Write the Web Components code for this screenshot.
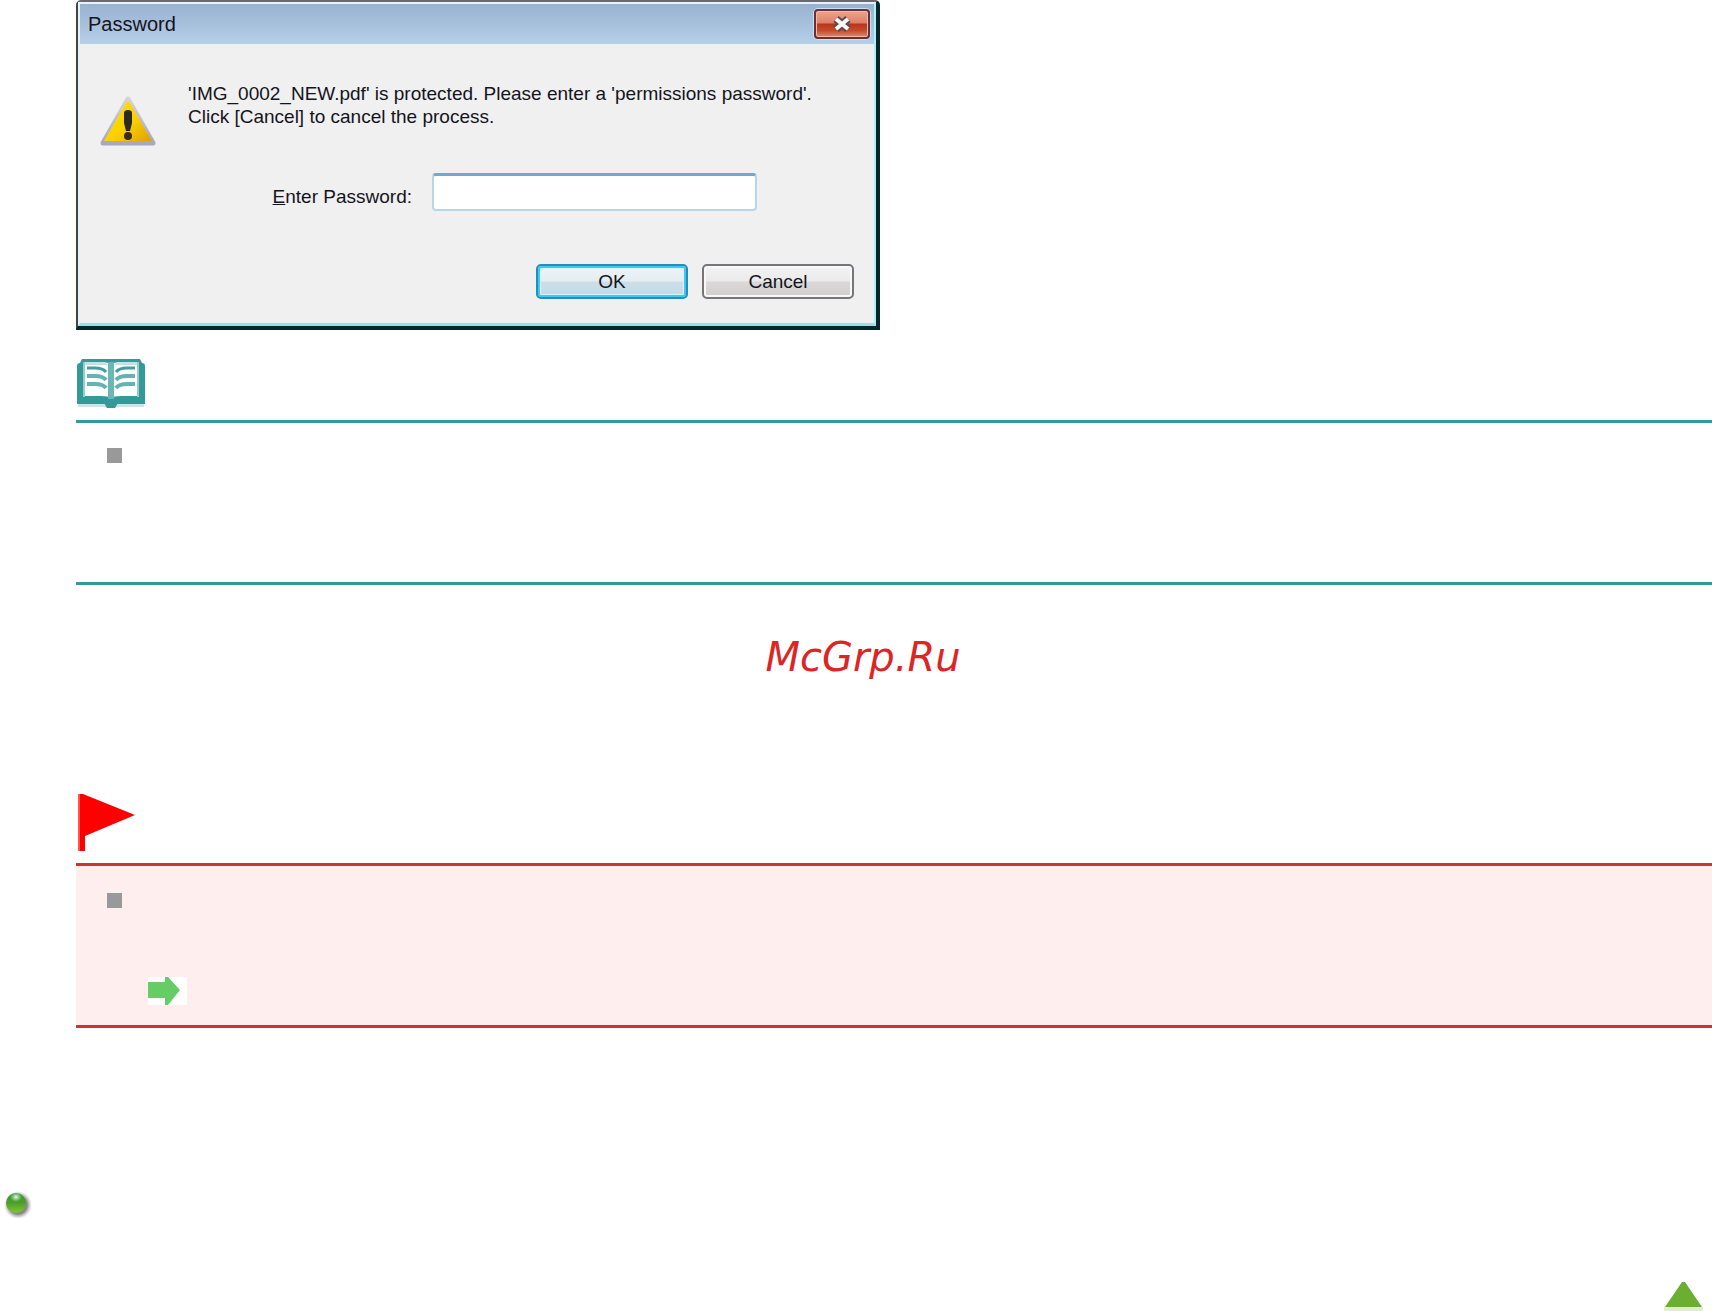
<!DOCTYPE html>
<html lang="en">

<head>
    <meta charset="UTF-8">
    <meta name="viewport" content="width=device-width, initial-scale=1.0">
    <title>Password</title>
    <style>
        body {
            margin: 0;
            background: #fff;
            color: #14141c;
            font-family: "Liberation Sans", Arial, sans-serif;
        }
    </style>
</head>

<body>
    <manual-page></manual-page>

    <script>
        // Attach an open shadow root filled from a template
        function render(host, html) {
            const template = document.createElement('template');
            template.innerHTML = html;
            host.attachShadow({ mode: 'open' }).appendChild(template.content.cloneNode(true));
        }

        class DialogButton extends HTMLElement {
            constructor() {
                super();
                render(this, `
                    <style>
                        :host { display: block; }
                        button {
                            box-sizing: border-box;
                            display: block;
                            width: 152px;
                            height: 35px;
                            padding: 0;
                            border: 2px solid #77757a;
                            border-radius: 5px;
                            background: linear-gradient(#f2f2f2, #ebebeb 48%, #dad8d8 52%, #d0cdcd);
                            box-shadow: inset 0 0 0 2px #f8f8f8;
                            color: inherit;
                            font: inherit;
                        }
                        :host([primary]) button {
                            border-color: #218fbd;
                            background: linear-gradient(#eef3f5, #e4eef2 48%, #ccdfe9 52%, #c6d7e3);
                            box-shadow: inset 0 0 0 2px #42c8ee, inset 0 0 0 3px #d2f4fc;
                        }
                    </style>
                    <button type="button"><slot></slot></button>
                `);
            }
        }

        class PasswordDialog extends HTMLElement {
            constructor() {
                super();
                render(this, `
                    <style>
                        :host {
                            box-sizing: border-box;
                            display: block;
                            width: 804px;
                            max-width: 100%;
                            border: solid #06262c;
                            border-width: 2px 4px 4px 2px;
                            border-top-color: #6c6a70;
                            border-left-color: #47413f;
                            border-radius: 5px 5px 0 0;
                            background: #f0f0f0;
                            font-size: 19px;
                            line-height: 23px;
                        }
                        .frame {
                            border: solid #e4f4fa;
                            border-width: 2px 2px 3px 2px;
                            border-bottom-color: #8fe4e8;
                            border-right-color: #a9f2f5;
                        }
                        header {
                            display: flex;
                            align-items: center;
                            justify-content: space-between;
                            height: 40px;
                            padding: 0 4px 0 8px;
                            background: linear-gradient(#98b2d0, #a7c0dc 50%, #b5d0ea);
                        }
                        h1 {
                            margin: 0;
                            font-size: 20px;
                            font-weight: normal;
                        }
                        .close {
                            display: flex;
                            align-items: center;
                            justify-content: center;
                            width: 56px;
                            height: 30px;
                            padding: 0;
                            border: 2px solid #64303a;
                            border-radius: 4px;
                            background: linear-gradient(#eba48f, #de8068 46%, #b8351a 50%, #c54b2c 75%, #e28a69);
                            box-shadow: inset 0 0 0 1px #f3b9a5, 0 0 0 1px #cddff2;
                        }
                        .message {
                            display: flex;
                            gap: 32px;
                            padding: 38px 20px 0 20px;
                        }
                        .message svg { flex: none; margin-top: 14px; }
                        p { margin: 0; }
                        .field {
                            display: flex;
                            align-items: center;
                            justify-content: flex-end;
                            gap: 20px;
                            padding: 25px 117px 0 0;
                        }
                        label { padding-top: 8px; }
                        input {
                            box-sizing: border-box;
                            width: 325px;
                            height: 38px;
                            padding: 0 8px;
                            border: 2px solid #b5d7ec;
                            border-top: 3px solid #79a6c5;
                            border-radius: 4px;
                            background: #fff;
                            font: inherit;
                        }
                        .actions {
                            display: flex;
                            justify-content: flex-end;
                            gap: 14px;
                            padding: 53px 20px 24px;
                        }
                    </style>
                    <div class="frame">
                        <header>
                            <h1>Password</h1>
                            <button class="close" type="button" aria-label="Close">
                                <svg width="22" height="18" viewBox="0 0 22 18">
                                    <path d="M5 4l12 10M17 4L5 14" stroke="#5f4650" stroke-width="8"/>
                                    <path d="M5 4l12 10M17 4L5 14" stroke="#f8f6f6" stroke-width="4"/>
                                </svg>
                            </button>
                        </header>
                        <div class="message">
                            <svg width="56" height="52" viewBox="0 0 56 52" aria-hidden="true">
                                <defs>
                                    <linearGradient id="rim" x2="0" y2="1">
                                        <stop stop-color="#d5d3dc"/>
                                        <stop offset="1" stop-color="#a7a7bd"/>
                                    </linearGradient>
                                    <linearGradient id="fill" x2="1" y2="1">
                                        <stop stop-color="#ffe600"/>
                                        <stop offset=".55" stop-color="#fbd000"/>
                                        <stop offset="1" stop-color="#dfa000"/>
                                    </linearGradient>
                                </defs>
                                <path d="M28 3L53 47H3z" fill="url(#rim)" stroke="url(#rim)" stroke-width="5" stroke-linejoin="round"/>
                                <path d="M28 4L52 45H4z" fill="url(#fill)"/>
                                <path d="M24 17q0-3 4-3t4 3v10l-2 8h-4l-2-8z" fill="#2c2a20"/>
                                <circle cx="28" cy="40" r="4" fill="#3b2c10"/>
                            </svg>
                            <p>'IMG_0002_NEW.pdf' is protected. Please enter a 'permissions password'.<br>Click [Cancel] to cancel the process.</p>
                        </div>
                        <div class="field">
                            <label for="password"><u>E</u>nter Password:</label>
                            <input id="password" type="password">
                        </div>
                        <div class="actions">
                            <dialog-button primary>OK</dialog-button>
                            <dialog-button>Cancel</dialog-button>
                        </div>
                    </div>
                `);
            }
        }

        // Icon above a ruled box, icon and list content come from slots
        class NoteBox extends HTMLElement {
            constructor() {
                super();
                render(this, `
                    <style>
                        :host { display: block; --rule: #339999; }
                        :host([kind="important"]) { --rule: #cc3333; --fill: #ffeeee; }
                        .box {
                            box-sizing: border-box;
                            min-height: 165px;
                            margin-top: 12px;
                            padding: 25px 31px 20px;
                            border: solid var(--rule);
                            border-width: 3px 0;
                            background: var(--fill, transparent);
                        }
                        :host([kind="important"]) .box { padding-top: 27px; }
                        ul { margin: 0; padding: 0; list-style: none; }
                        li::before {
                            content: "";
                            display: block;
                            width: 15px;
                            height: 15px;
                            background: #999;
                        }
                        ::slotted(svg) { display: block; }
                    </style>
                    <slot name="icon"></slot>
                    <div class="box">
                        <ul><li><slot></slot></li></ul>
                    </div>
                `);
            }
        }

        class ManualPage extends HTMLElement {
            constructor() {
                super();
                render(this, `
                    <style>
                        :host { display: block; }
                        main { padding-left: 76px; }
                        svg { display: block; }
                        .note { margin-top: 29px; }
                        .site {
                            margin: 0 -14px 0 -76px;
                            padding: 48px 0 112px;
                            color: #dc2626;
                            font: italic 40px/48px "DejaVu Sans", Verdana, sans-serif;
                            text-align: center;
                        }
                        .link { margin: 69px 0 0 41px; background: #fff; }
                        .related { padding: 162px 0 0 4px; }
                        footer {
                            display: flex;
                            justify-content: flex-end;
                            padding: 63px 8px 0 0;
                        }
                    </style>
                    <main>
                        <password-dialog></password-dialog>
                        <note-box class="note">
                            <svg slot="icon" width="70" height="49" viewBox="0 0 70 49" aria-hidden="true">
                                <path d="M1 7q0-3 3-3l2-4h58l2 4q3 0 3 3v38H1z" fill="#339999"/>
                                <path d="M2 45h66v3H2z" fill="#cbe4e4"/>
                                <path d="M28 44h14l-3 5h-8z" fill="#339999"/>
                                <path d="M9 3h16q7 0 10 3 3-3 10-3h16v34H45q-7 0-10 2-3-2-10-2H9z" fill="#fff"/>
                                <path d="M9 3h16q5 0 7 3H9zM61 3H45q-5 0-7 3h23z" fill="#c5e2e2"/>
                                <path d="M8 3v35M62 3v35" stroke="#9acccc" stroke-width="2"/>
                                <path d="M35 3v37" stroke="#6db6b6" stroke-width="6"/>
                                <path d="M11 17h8q8 0 11 4M11 25h8q8 0 11 4M59 17h-8q-8 0-11 4M59 25h-8q-8 0-11 4" fill="none" stroke="#66b2b2" stroke-width="4"/>
                                <path d="M11 9h8q8 0 11 4M59 9h-8q-8 0-11 4" fill="none" stroke="#429f9f" stroke-width="3"/>
                            </svg>
                        </note-box>
                        <div class="site">McGrp.Ru</div>
                        <note-box kind="important">
                            <svg slot="icon" width="62" height="58" viewBox="0 0 62 58" aria-hidden="true">
                                <path d="M2 1h5l52 21L9 43v15H2z" fill="#ff0000"/>
                                <path d="M3 1v57" stroke="#ff5555" stroke-width="2"/>
                            </svg>
                            <svg class="link" width="39" height="28" viewBox="0 0 39 28" aria-hidden="true">
                                <path d="M0 5h17V0h3l12 13-12 15h-3v-7H0z" fill="#66cc66"/>
                            </svg>
                        </note-box>
                    </main>
                    <div class="related">
                        <svg width="36" height="28" viewBox="0 0 36 28" aria-hidden="true">
                            <defs>
                                <radialGradient id="shade">
                                    <stop offset=".65" stop-color="#555" stop-opacity=".7"/>
                                    <stop offset="1" stop-color="#999" stop-opacity="0"/>
                                </radialGradient>
                                <linearGradient id="ball" x2="0" y2="1">
                                    <stop stop-color="#35963a"/>
                                    <stop offset=".5" stop-color="#4f9f27"/>
                                    <stop offset="1" stop-color="#7fc832"/>
                                </linearGradient>
                                <radialGradient id="shine">
                                    <stop stop-color="#e9ffe9"/>
                                    <stop offset="1" stop-color="#b0e0b0" stop-opacity="0"/>
                                </radialGradient>
                            </defs>
                            <circle cx="14" cy="15" r="14" fill="url(#shade)"/>
                            <circle cx="12" cy="13" r="10" fill="url(#ball)"/>
                            <ellipse cx="12" cy="7" rx="6" ry="5" fill="url(#shine)"/>
                        </svg>
                    </div>
                    <footer>
                        <svg width="41" height="30" viewBox="0 0 41 30" aria-hidden="true">
                            <path d="M1 26h39v4H1z" fill="#deeecf"/>
                            <path d="M19 1h3l17 25H2z" fill="#6aae32"/>
                        </svg>
                    </footer>
                `);
            }
        }

        customElements.define('dialog-button', DialogButton);
        customElements.define('password-dialog', PasswordDialog);
        customElements.define('note-box', NoteBox);
        customElements.define('manual-page', ManualPage);
    </script>
</body>

</html>
